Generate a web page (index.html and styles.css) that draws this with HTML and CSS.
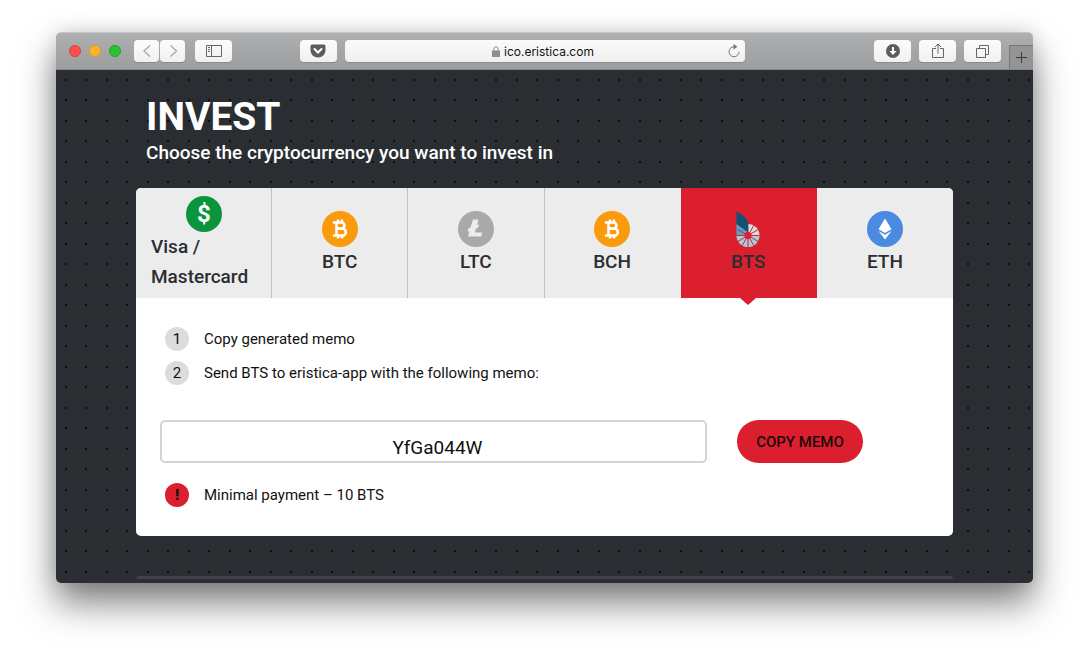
FILE: index.html
```
<!DOCTYPE html>
<html lang="en">
<head>
  <meta charset="UTF-8">
  <meta name="viewport" content="width=device-width, initial-scale=1.0">
  <title>Invest</title>
  <link rel="stylesheet" href="styles.css">
</head>
<body>
  <div class="window">

    <!-- browser toolbar -->
    <header class="toolbar">
      <div class="toolbar-left">
        <div class="lights">
          <span class="light red"></span>
          <span class="light yellow"></span>
          <span class="light green"></span>
        </div>
        <div class="nav">
          <button type="button" class="tool small" aria-label="Back">
            <svg width="24" height="22" viewBox="0 0 24 22"><path d="M15 5.500l-6 5.500 6 5.500" stroke="#aaa" stroke-width="1.400"/></svg>
          </button>
          <button type="button" class="tool small" aria-label="Forward">
            <svg width="24" height="22" viewBox="0 0 24 22"><path d="M9.500 5.500l6 5.500-6 5.500" stroke="#aaa" stroke-width="1.400"/></svg>
          </button>
        </div>
        <button type="button" class="tool" aria-label="Sidebar">
          <svg width="16" height="12" viewBox="0 0 16 12"><path d="M.5.500h15v11H.5zM5.500.500v11M2 2.500h2M2 4.500h2M2 6.500h2"/></svg>
        </button>
        <button type="button" class="tool pocket" aria-label="Pocket">
          <svg width="16" height="14" viewBox="0 0 16 14"><path d="M2 .5h12q1.500 0 1.500 1.500v4.500a7.500 7 0 0 1-15 0V2Q.5.500 2 .5z" fill="#5c5c5c" stroke="none"/><path d="M4.500 5L8 8.500 11.500 5" stroke="#fff" stroke-width="2" stroke-linecap="round"/></svg>
        </button>
      </div>

      <div class="address">
        <svg class="lock" width="8" height="11" viewBox="0 0 8 11"><path d="M1.800 5V3a2.200 2.200 0 0 1 4.400 0v2" stroke="#8e8e8e"/><path d="M0 4.500h8V11H0z" fill="#8e8e8e" stroke="none"/></svg>
        <input type="text" class="url" aria-label="Address" value="ico.eristica.com">
        <button type="button" class="reload" aria-label="Reload">
          <svg width="12" height="14" viewBox="0 0 12 14"><path d="M6 2.800a5 5 0 1 0 5 5" stroke="#777"/><path d="M5.500 0l4 2.800-4 2.800z" fill="#777" stroke="none"/></svg>
        </button>
      </div>

      <div class="toolbar-right">
        <button type="button" class="tool" aria-label="Downloads">
          <svg width="14" height="14" viewBox="0 0 14 14"><circle cx="7" cy="7" r="7" fill="#5c5c5c" stroke="none"/><path d="M7 3v5" stroke="#fff" stroke-width="2"/><path d="M3.500 7h7L7 11z" fill="#fff" stroke="none"/></svg>
        </button>
        <button type="button" class="tool" aria-label="Share">
          <svg width="12" height="16" viewBox="0 0 12 16"><path d="M4 5.500H.5v9h11v-9H8M6 10.500V1M3 4l3-3 3 3"/></svg>
        </button>
        <button type="button" class="tool" aria-label="Tabs">
          <svg width="13" height="13" viewBox="0 0 13 13"><path d="M.5 3.500h9v9h-9zM3.500 3V.500h9v9H10"/></svg>
        </button>
        <button type="button" class="new-tab" aria-label="New tab">
          <svg width="11" height="11" viewBox="0 0 11 11"><path d="M5.500 0v11M0 5.500h11" stroke="#3c3c3c"/></svg>
        </button>
      </div>
    </header>

    <main class="page">
      <h1>INVEST</h1>
      <h2>Choose the cryptocurrency you want to invest in</h2>

      <section class="card">
        <nav class="tabs">
          <button type="button" class="tab">
            <svg width="36" height="36" viewBox="0 0 36 36"><circle cx="18" cy="18" r="18" fill="#0a943b"/><text class="sign" x="18" y="26" text-anchor="middle">$</text></svg>
            <span>Visa / Mastercard</span>
          </button>
          <button type="button" class="tab">
            <svg width="36" height="36" viewBox="0 0 36 36"><circle cx="18" cy="18" r="18" fill="#fb9a0d"/><g class="mark"><path d="M11 11.500h8.500a3 3 0 0 1 0 6H15M14.500 17.800h6a3.300 3.300 0 0 1 0 6.700H11M14.500 11v14M16 8.500v3M20 8.500v3M16 24.500v3M20 24.500v3"/></g></svg>
            <span>BTC</span>
          </button>
          <button type="button" class="tab">
            <svg width="36" height="36" viewBox="0 0 36 36"><circle cx="18" cy="18" r="18" fill="#a9a9a9"/><path d="M15 8.500h5.500l-1.600 5.800 2.200-1.100-.8 3.200-2.400 1.300-1 3.800h7.300l-1 4H10l1.500-5.800-2 1 .8-3.200 2.200-1.200z" fill="#ececec"/></svg>
            <span>LTC</span>
          </button>
          <button type="button" class="tab">
            <svg width="36" height="36" viewBox="0 0 36 36"><circle cx="18" cy="18" r="18" fill="#fb9a0d"/><g class="mark"><path d="M11 11.500h8.500a3 3 0 0 1 0 6H15M14.500 17.800h6a3.300 3.300 0 0 1 0 6.700H11M14.500 11v14M16 8.500v3M20 8.500v3M16 24.500v3M20 24.500v3"/></g></svg>
            <span>BCH</span>
          </button>
          <button type="button" class="tab active">
            <svg width="36" height="36" viewBox="0 0 36 36">
              <path d="M18 24.500V13a11.500 11.500 0 0 1 11.500 11.500z" fill="#d3dde4"/>
              <path d="M18 24.500h11.500a11.500 11.500 0 0 1-23 0z" fill="#a9cbdc"/>
              <path d="M18 24.500H6.500V13L18 21z" fill="#4fa6c8"/>
              <path d="M18 13v23M6.500 24.500h23M8 18.700l20 11.600M8 30.300l20-11.600M12.200 34.500l11.600-20M18 24.500l5.800 10" stroke="#dc1f2e" stroke-width="1"/>
              <circle cx="18" cy="24.500" r="3.500" fill="#dc1f2e"/>
              <path d="M6.500.500Q18 6 18 13v8L6.500 13z" fill="#0e5279"/>
            </svg>
            <span>BTS</span>
          </button>
          <button type="button" class="tab">
            <svg width="36" height="36" viewBox="0 0 36 36"><circle cx="18" cy="18" r="18" fill="#4a8ae0"/><path d="M18 7.500l6.500 10.800L18 22l-6.500-3.700zM11.500 20l6.500 3.700 6.500-3.700L18 28.500z" fill="#fff"/></svg>
            <span>ETH</span>
          </button>
        </nav>

        <div class="content">
          <ol class="steps">
            <li><span class="num">1</span>Copy generated memo</li>
            <li><span class="num">2</span><label for="memo">Send BTS to eristica-app with the following memo:</label></li>
          </ol>
          <div class="memo-row">
            <input type="text" id="memo" class="memo" value="YfGa044W" readonly>
            <button type="button" class="copy">COPY MEMO</button>
          </div>
          <p class="note"><span class="num warn">!</span>Minimal payment – 10 BTS</p>
        </div>
      </section>

      <div class="next-section"></div>
    </main>
  </div>
</body>
</html>
```
FILE: styles.css
```
* {
  box-sizing: border-box;
}

body {
  min-height: 100vh;
  margin: 0;
  padding: 32px 56px;
  background-color: #fff;
  font-family: Roboto, "Liberation Sans", sans-serif;
  color: #111;
}

button,
input {
  font-family: inherit;
  margin: 0;
  padding: 0;
  border: none;
}

button {
  cursor: pointer;
}

.window {
  border-radius: 5px;
  box-shadow: 0 20px 36px rgba(0, 0, 0, 0.5), 0 0 20px rgba(0, 0, 0, 0.12);
}

/* toolbar */
.toolbar {
  display: grid;
  grid-template-columns: 1fr 400px 1fr;
  align-items: center;
  gap: 8px;
  height: 38px;
  border-top: 1px solid #c4c5c6;
  border-bottom: 1px solid #85888a;
  border-radius: 5px 5px 0 0;
  background: linear-gradient(#afb0b1, #9b9d9f);
}

.toolbar svg {
  fill: none;
  stroke: #666;
}

.toolbar-left,
.toolbar-right,
.lights,
.nav {
  display: flex;
  align-items: center;
}

.toolbar-left {
  padding-left: 13px;
}

.lights {
  gap: 8px;
  margin-right: 13px;
}

.light {
  width: 12px;
  height: 12px;
  border-radius: 50%;
}

.red {
  background-color: #fc4f4b;
  border: 1px solid #dc3f3c;
}

.yellow {
  background-color: #fdb32a;
  border: 1px solid #de9a22;
}

.green {
  background-color: #29c232;
  border: 1px solid #1fa328;
}

.nav {
  gap: 1px;
  margin-right: 10px;
}

.tool {
  display: flex;
  align-items: center;
  justify-content: center;
  width: 37px;
  height: 22px;
  border-radius: 4px;
  background: linear-gradient(#fcfcfc, #f0f0f0);
  box-shadow: 0 1px 0 #8a8c8d;
}

.small {
  width: 25px;
}

.pocket {
  margin-left: auto;
}

.address {
  display: flex;
  align-items: center;
  gap: 4px;
  height: 22px;
  padding-left: 20px;
  border-radius: 4px;
  background: linear-gradient(#fbfbfb, #efefef);
  box-shadow: 0 1px 0 #8a8c8d;
}

.lock {
  margin-left: auto;
}

.url {
  width: 92px;
  background: none;
  font-family: Inter, "Liberation Sans", sans-serif;
  font-size: 12px;
  color: #111;
}

.reload {
  display: flex;
  margin-left: auto;
  margin-right: 5px;
  background: none;
}

.toolbar-right {
  justify-content: flex-end;
  align-self: stretch;
  gap: 8px;
}

.new-tab {
  display: flex;
  align-items: center;
  justify-content: center;
  align-self: flex-end;
  width: 24px;
  height: 24px;
  border-top: 1px solid #777;
  border-left: 1px solid #777;
  background-color: #929495;
}

/* page, dotted background */
.page {
  padding: 23px 80px 4px;
  border-radius: 0 0 5px 5px;
  background-color: #2a2d32;
  background-image:
    radial-gradient(circle at 10px 10px, #0c0e11 1px, transparent 1px),
    radial-gradient(circle at 30px 10px, #0c0e11 1px, transparent 1px),
    radial-gradient(circle at 10px 30px, #0c0e11 1px, transparent 1px),
    radial-gradient(circle at 30px 30px, #0c0e11 1px, transparent 1px);
  background-size: 41px 41px;
}

h1 {
  margin: 0 10px;
  font-size: 39px;
  line-height: 48px;
  font-weight: 700;
  color: #fff;
}

h2 {
  margin: 0 10px 23px;
  font-size: 19px;
  line-height: 24px;
  font-weight: 500;
  color: #fff;
}

.card {
  border-radius: 5px;
  background-color: #fff;
}

.tabs {
  display: grid;
  grid-template-columns: repeat(6, 1fr);
}

.tab {
  position: relative;
  display: flex;
  flex-direction: column;
  align-items: center;
  justify-content: center;
  height: 110px;
  padding: 2px 15px 0;
  border-right: 1px solid #c0c0c0;
  background-color: #ececec;
  font-size: 19px;
  line-height: 30px;
  font-weight: 500;
  color: #2a2d32;
  text-align: left;
}

.tab:first-child {
  border-radius: 5px 0 0 0;
}

.tab:last-child {
  border-right: none;
  border-radius: 0 5px 0 0;
}

.tab:nth-child(4) {
  border-right-color: #ececec;
}

.tab.active {
  border-right-color: #dc1f2e;
  background-color: #dc1f2e;
}

/* arrow under the selected tab */
.active::after {
  content: "";
  position: absolute;
  top: 100%;
  left: 50%;
  margin-left: -8px;
  border: 8px solid transparent;
  border-top: 7px solid #dc1f2e;
  border-bottom: none;
}

.sign {
  font-size: 24px;
  font-weight: 700;
  fill: #fff;
}

.mark {
  fill: none;
  stroke: #fff;
  stroke-width: 2.6;
}

.content {
  padding: 29px 24px;
  font-size: 15px;
  line-height: 24px;
}

.steps {
  display: flex;
  flex-direction: column;
  gap: 10px;
  margin: 0 0 35px;
  padding: 0;
  list-style: none;
}

.steps li,
.note {
  display: flex;
  margin: 0 5px;
}

.num {
  width: 24px;
  height: 24px;
  margin-right: 15px;
  border-radius: 50%;
  background-color: #dcdcdc;
  text-align: center;
}

.warn {
  background-color: #dc1f2e;
  font-weight: 900;
}

.memo-row {
  display: flex;
  gap: 30px;
  margin-bottom: 20px;
  padding-right: 66px;
}

.memo {
  flex: 1;
  min-width: 0;
  height: 43px;
  padding: 12px 0 0 8px;
  border: 2px solid #d4d4d4;
  border-radius: 5px;
  background-color: #fff;
  font-size: 19px;
  color: #111;
  text-align: center;
}

.copy {
  width: 126px;
  height: 43px;
  border-radius: 22px;
  background-color: #dc1f2e;
  font-size: 15px;
  font-weight: 500;
  color: #1a0a0c;
}

/* top edge of the next block */
.next-section {
  height: 3px;
  margin-top: 40px;
  border-radius: 3px 3px 0 0;
  background-color: #404246;
}
```
